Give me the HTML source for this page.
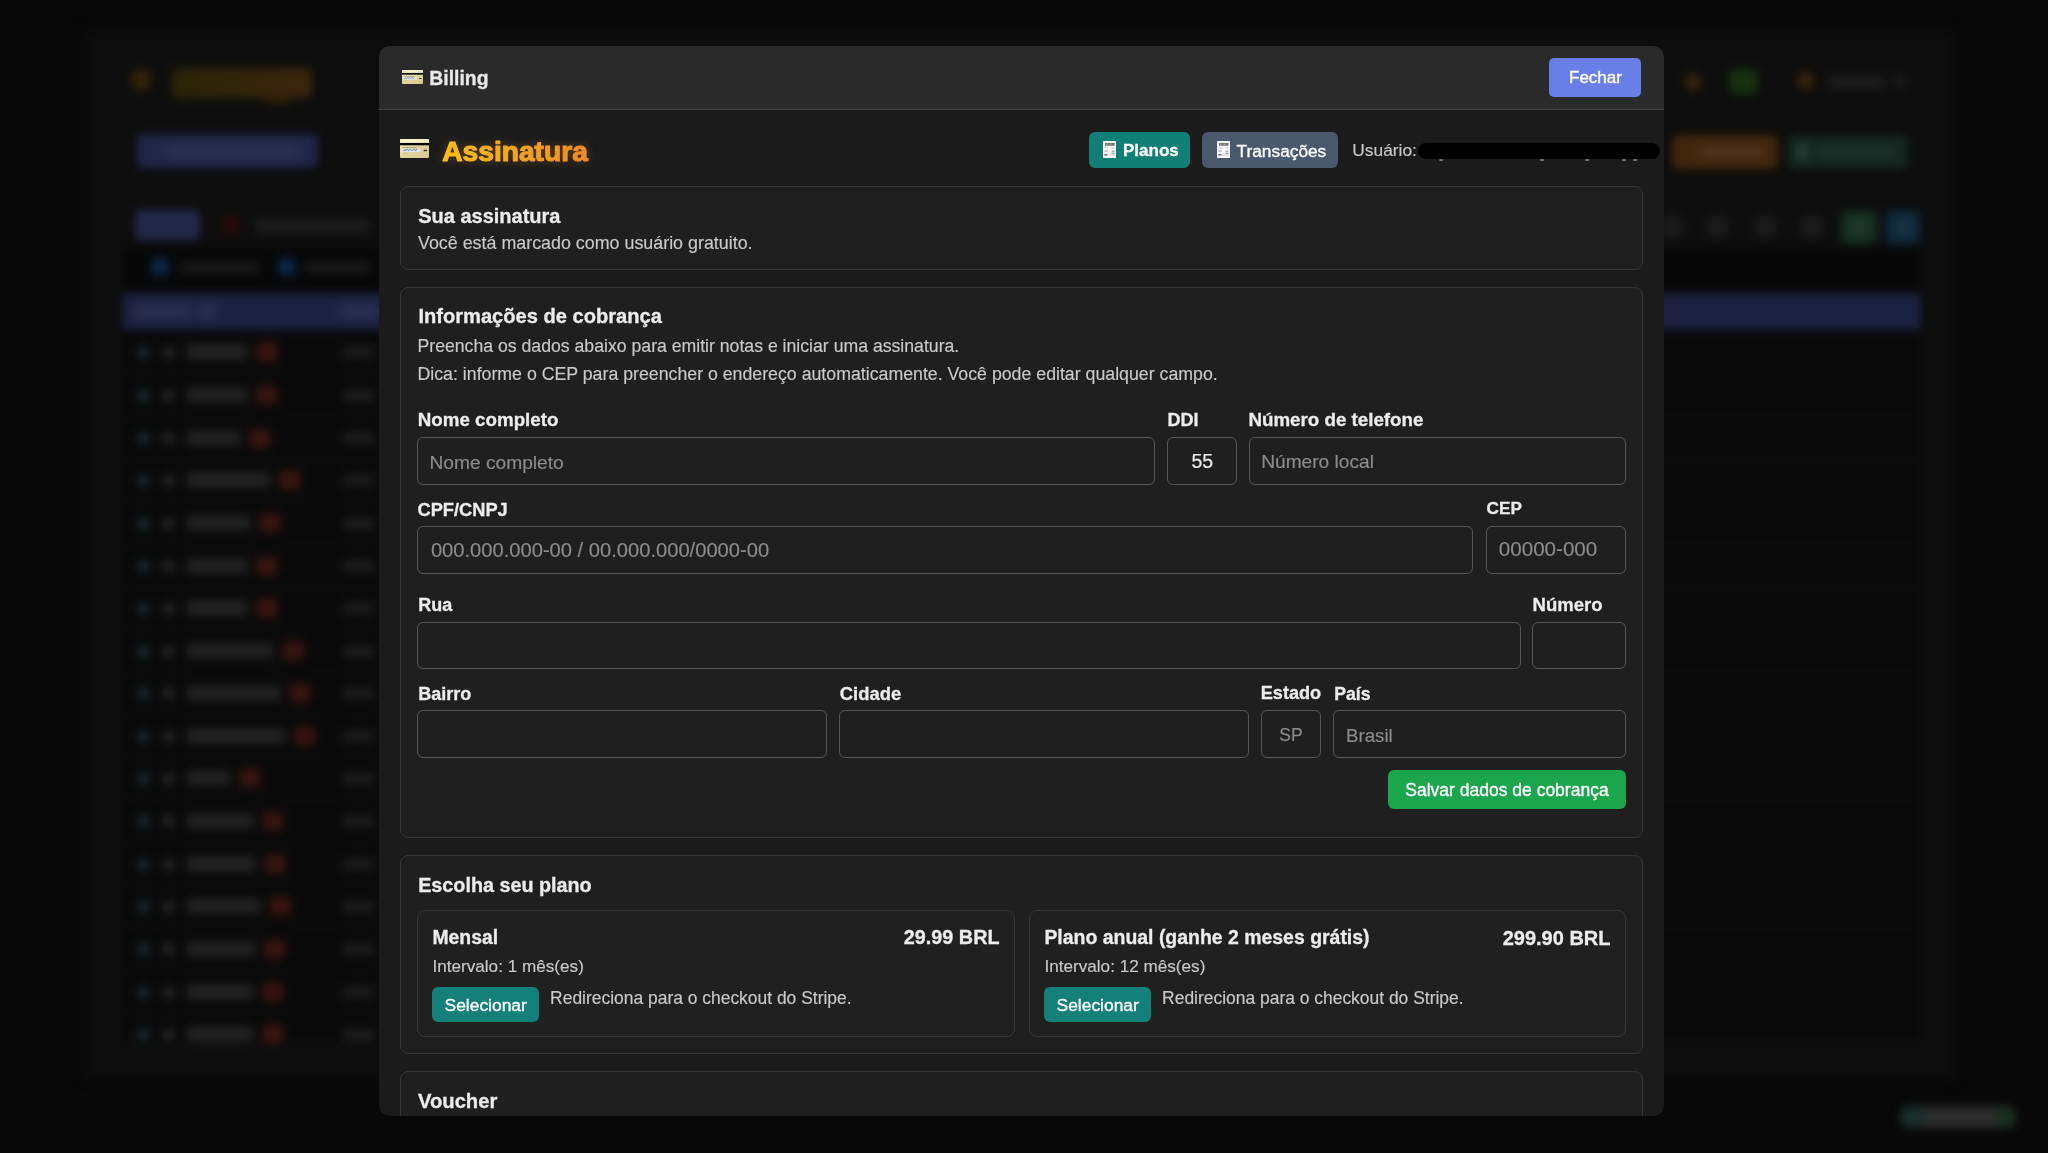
<!DOCTYPE html>
<html><head><meta charset="utf-8"><title>Billing</title>
<style>
html,body{margin:0;padding:0;}
body{width:2048px;height:1153px;overflow:hidden;position:relative;background:#080808;font-family:"Liberation Sans",sans-serif;}
.t{position:absolute;white-space:nowrap;}
.r{position:absolute;}
#bg{position:absolute;left:0;top:0;width:2048px;height:1153px;filter:blur(5px);}
#modalclip{position:absolute;left:0;top:0;width:2048px;height:1153px;will-change:transform;clip-path:inset(46px 384px 37px 379px round 10px);}
</style></head><body>
<div id="bg">
<div class="r" style="left:82px;top:28px;width:1874px;height:1053px;background:#0b0b0b;"></div>
<div class="r" style="left:92px;top:36px;width:1858px;height:1040px;background:#0d0d0d;"></div>
<div class="r" style="left:123px;top:247px;width:1797px;height:794px;background:#090909;"></div>
<div class="r" style="left:123px;top:247px;width:1797px;height:46px;background:#070707;"></div>
<div class="r" style="left:130px;top:68px;width:22px;height:23px;background:#33200a;border-radius:50%;"></div>
<div class="r" style="left:172px;top:68px;width:140px;height:30px;background:linear-gradient(90deg,#2c2408,#3a260a);border-radius:5px;"></div>
<div class="r" style="left:265px;top:92px;width:25px;height:11px;background:#33220a;border-radius:4px;"></div>
<div class="r" style="left:137px;top:134px;width:181px;height:34px;background:#20264a;border-radius:6px;"></div>
<div class="r" style="left:165px;top:145px;width:135px;height:12px;background:#2c3152;border-radius:3px;"></div>
<div class="r" style="left:135px;top:210px;width:65px;height:30px;background:#22284a;border-radius:6px;"></div>
<div class="r" style="left:222px;top:216px;width:16px;height:18px;background:#2a0a0a;border-radius:3px;"></div>
<div class="r" style="left:255px;top:219px;width:115px;height:14px;background:#1c1c1c;border-radius:3px;"></div>
<div class="r" style="left:150px;top:257px;width:20px;height:20px;background:#0a2648;border-radius:50%;"></div>
<div class="r" style="left:180px;top:262px;width:80px;height:11px;background:#1a1a1a;border-radius:3px;"></div>
<div class="r" style="left:277px;top:257px;width:20px;height:20px;background:#0a2648;border-radius:50%;"></div>
<div class="r" style="left:305px;top:262px;width:65px;height:11px;background:#1a1a1a;border-radius:3px;"></div>
<div class="r" style="left:123px;top:293px;width:1797px;height:37px;background:#1c2242;"></div>
<div class="r" style="left:135px;top:305px;width:55px;height:13px;background:#2a3050;border-radius:3px;"></div>
<div class="r" style="left:198px;top:305px;width:17px;height:13px;background:#2a3050;border-radius:3px;"></div>
<div class="r" style="left:340px;top:305px;width:40px;height:13px;background:#2a3050;border-radius:3px;"></div>
<div class="r" style="left:137px;top:346px;width:13px;height:13px;background:#1a2c30;border-radius:50%;"></div>
<div class="r" style="left:162px;top:346px;width:13px;height:13px;background:#262626;border-radius:50%;"></div>
<div class="r" style="left:186px;top:344px;width:62px;height:16px;background:#212121;border-radius:3px;"></div>
<div class="r" style="left:256px;top:342px;width:22px;height:20px;background:#361410;border-radius:5px;"></div>
<div class="r" style="left:343px;top:346px;width:32px;height:13px;background:#1c1c1c;border-radius:3px;"></div>
<div class="r" style="left:123px;top:373px;width:1797px;height:1px;background:#121212;"></div>
<div class="r" style="left:137px;top:389px;width:13px;height:13px;background:#1a2c30;border-radius:50%;"></div>
<div class="r" style="left:162px;top:389px;width:13px;height:13px;background:#262626;border-radius:50%;"></div>
<div class="r" style="left:186px;top:387px;width:62px;height:16px;background:#212121;border-radius:3px;"></div>
<div class="r" style="left:256px;top:385px;width:22px;height:20px;background:#361410;border-radius:5px;"></div>
<div class="r" style="left:343px;top:389px;width:32px;height:13px;background:#1c1c1c;border-radius:3px;"></div>
<div class="r" style="left:123px;top:416px;width:1797px;height:1px;background:#121212;"></div>
<div class="r" style="left:137px;top:432px;width:13px;height:13px;background:#1a2c30;border-radius:50%;"></div>
<div class="r" style="left:162px;top:432px;width:13px;height:13px;background:#262626;border-radius:50%;"></div>
<div class="r" style="left:186px;top:430px;width:55px;height:16px;background:#212121;border-radius:3px;"></div>
<div class="r" style="left:249px;top:428px;width:22px;height:20px;background:#361410;border-radius:5px;"></div>
<div class="r" style="left:343px;top:432px;width:32px;height:13px;background:#1c1c1c;border-radius:3px;"></div>
<div class="r" style="left:123px;top:459px;width:1797px;height:1px;background:#121212;"></div>
<div class="r" style="left:137px;top:474px;width:13px;height:13px;background:#1a2c30;border-radius:50%;"></div>
<div class="r" style="left:162px;top:474px;width:13px;height:13px;background:#262626;border-radius:50%;"></div>
<div class="r" style="left:186px;top:472px;width:85px;height:16px;background:#212121;border-radius:3px;"></div>
<div class="r" style="left:279px;top:470px;width:22px;height:20px;background:#361410;border-radius:5px;"></div>
<div class="r" style="left:343px;top:474px;width:32px;height:13px;background:#1c1c1c;border-radius:3px;"></div>
<div class="r" style="left:123px;top:501px;width:1797px;height:1px;background:#121212;"></div>
<div class="r" style="left:137px;top:517px;width:13px;height:13px;background:#1a2c30;border-radius:50%;"></div>
<div class="r" style="left:162px;top:517px;width:13px;height:13px;background:#262626;border-radius:50%;"></div>
<div class="r" style="left:186px;top:515px;width:65px;height:16px;background:#212121;border-radius:3px;"></div>
<div class="r" style="left:259px;top:513px;width:22px;height:20px;background:#361410;border-radius:5px;"></div>
<div class="r" style="left:343px;top:517px;width:32px;height:13px;background:#1c1c1c;border-radius:3px;"></div>
<div class="r" style="left:123px;top:544px;width:1797px;height:1px;background:#121212;"></div>
<div class="r" style="left:137px;top:560px;width:13px;height:13px;background:#1a2c30;border-radius:50%;"></div>
<div class="r" style="left:162px;top:560px;width:13px;height:13px;background:#262626;border-radius:50%;"></div>
<div class="r" style="left:186px;top:558px;width:62px;height:16px;background:#212121;border-radius:3px;"></div>
<div class="r" style="left:256px;top:556px;width:22px;height:20px;background:#361410;border-radius:5px;"></div>
<div class="r" style="left:343px;top:560px;width:32px;height:13px;background:#1c1c1c;border-radius:3px;"></div>
<div class="r" style="left:123px;top:587px;width:1797px;height:1px;background:#121212;"></div>
<div class="r" style="left:137px;top:602px;width:13px;height:13px;background:#1a2c30;border-radius:50%;"></div>
<div class="r" style="left:162px;top:602px;width:13px;height:13px;background:#262626;border-radius:50%;"></div>
<div class="r" style="left:186px;top:600px;width:62px;height:16px;background:#212121;border-radius:3px;"></div>
<div class="r" style="left:256px;top:598px;width:22px;height:20px;background:#361410;border-radius:5px;"></div>
<div class="r" style="left:343px;top:602px;width:32px;height:13px;background:#1c1c1c;border-radius:3px;"></div>
<div class="r" style="left:123px;top:629px;width:1797px;height:1px;background:#121212;"></div>
<div class="r" style="left:137px;top:645px;width:13px;height:13px;background:#1a2c30;border-radius:50%;"></div>
<div class="r" style="left:162px;top:645px;width:13px;height:13px;background:#262626;border-radius:50%;"></div>
<div class="r" style="left:186px;top:643px;width:88px;height:16px;background:#212121;border-radius:3px;"></div>
<div class="r" style="left:282px;top:641px;width:22px;height:20px;background:#361410;border-radius:5px;"></div>
<div class="r" style="left:343px;top:645px;width:32px;height:13px;background:#1c1c1c;border-radius:3px;"></div>
<div class="r" style="left:123px;top:672px;width:1797px;height:1px;background:#121212;"></div>
<div class="r" style="left:137px;top:687px;width:13px;height:13px;background:#1a2c30;border-radius:50%;"></div>
<div class="r" style="left:162px;top:687px;width:13px;height:13px;background:#262626;border-radius:50%;"></div>
<div class="r" style="left:186px;top:685px;width:95px;height:16px;background:#212121;border-radius:3px;"></div>
<div class="r" style="left:289px;top:683px;width:22px;height:20px;background:#361410;border-radius:5px;"></div>
<div class="r" style="left:343px;top:687px;width:32px;height:13px;background:#1c1c1c;border-radius:3px;"></div>
<div class="r" style="left:123px;top:714px;width:1797px;height:1px;background:#121212;"></div>
<div class="r" style="left:137px;top:730px;width:13px;height:13px;background:#1a2c30;border-radius:50%;"></div>
<div class="r" style="left:162px;top:730px;width:13px;height:13px;background:#262626;border-radius:50%;"></div>
<div class="r" style="left:186px;top:728px;width:100px;height:16px;background:#212121;border-radius:3px;"></div>
<div class="r" style="left:294px;top:726px;width:22px;height:20px;background:#361410;border-radius:5px;"></div>
<div class="r" style="left:343px;top:730px;width:32px;height:13px;background:#1c1c1c;border-radius:3px;"></div>
<div class="r" style="left:123px;top:757px;width:1797px;height:1px;background:#121212;"></div>
<div class="r" style="left:137px;top:772px;width:13px;height:13px;background:#1a2c30;border-radius:50%;"></div>
<div class="r" style="left:162px;top:772px;width:13px;height:13px;background:#262626;border-radius:50%;"></div>
<div class="r" style="left:186px;top:770px;width:45px;height:16px;background:#212121;border-radius:3px;"></div>
<div class="r" style="left:239px;top:768px;width:22px;height:20px;background:#361410;border-radius:5px;"></div>
<div class="r" style="left:343px;top:772px;width:32px;height:13px;background:#1c1c1c;border-radius:3px;"></div>
<div class="r" style="left:123px;top:799px;width:1797px;height:1px;background:#121212;"></div>
<div class="r" style="left:137px;top:815px;width:13px;height:13px;background:#1a2c30;border-radius:50%;"></div>
<div class="r" style="left:162px;top:815px;width:13px;height:13px;background:#262626;border-radius:50%;"></div>
<div class="r" style="left:186px;top:813px;width:68px;height:16px;background:#212121;border-radius:3px;"></div>
<div class="r" style="left:262px;top:811px;width:22px;height:20px;background:#361410;border-radius:5px;"></div>
<div class="r" style="left:343px;top:815px;width:32px;height:13px;background:#1c1c1c;border-radius:3px;"></div>
<div class="r" style="left:123px;top:842px;width:1797px;height:1px;background:#121212;"></div>
<div class="r" style="left:137px;top:858px;width:13px;height:13px;background:#1a2c30;border-radius:50%;"></div>
<div class="r" style="left:162px;top:858px;width:13px;height:13px;background:#262626;border-radius:50%;"></div>
<div class="r" style="left:186px;top:856px;width:70px;height:16px;background:#212121;border-radius:3px;"></div>
<div class="r" style="left:264px;top:854px;width:22px;height:20px;background:#361410;border-radius:5px;"></div>
<div class="r" style="left:343px;top:858px;width:32px;height:13px;background:#1c1c1c;border-radius:3px;"></div>
<div class="r" style="left:123px;top:885px;width:1797px;height:1px;background:#121212;"></div>
<div class="r" style="left:137px;top:900px;width:13px;height:13px;background:#1a2c30;border-radius:50%;"></div>
<div class="r" style="left:162px;top:900px;width:13px;height:13px;background:#262626;border-radius:50%;"></div>
<div class="r" style="left:186px;top:898px;width:75px;height:16px;background:#212121;border-radius:3px;"></div>
<div class="r" style="left:269px;top:896px;width:22px;height:20px;background:#361410;border-radius:5px;"></div>
<div class="r" style="left:343px;top:900px;width:32px;height:13px;background:#1c1c1c;border-radius:3px;"></div>
<div class="r" style="left:123px;top:927px;width:1797px;height:1px;background:#121212;"></div>
<div class="r" style="left:137px;top:943px;width:13px;height:13px;background:#1a2c30;border-radius:50%;"></div>
<div class="r" style="left:162px;top:943px;width:13px;height:13px;background:#262626;border-radius:50%;"></div>
<div class="r" style="left:186px;top:941px;width:70px;height:16px;background:#212121;border-radius:3px;"></div>
<div class="r" style="left:264px;top:939px;width:22px;height:20px;background:#361410;border-radius:5px;"></div>
<div class="r" style="left:343px;top:943px;width:32px;height:13px;background:#1c1c1c;border-radius:3px;"></div>
<div class="r" style="left:123px;top:970px;width:1797px;height:1px;background:#121212;"></div>
<div class="r" style="left:137px;top:986px;width:13px;height:13px;background:#1a2c30;border-radius:50%;"></div>
<div class="r" style="left:162px;top:986px;width:13px;height:13px;background:#262626;border-radius:50%;"></div>
<div class="r" style="left:186px;top:984px;width:68px;height:16px;background:#212121;border-radius:3px;"></div>
<div class="r" style="left:262px;top:982px;width:22px;height:20px;background:#361410;border-radius:5px;"></div>
<div class="r" style="left:343px;top:986px;width:32px;height:13px;background:#1c1c1c;border-radius:3px;"></div>
<div class="r" style="left:123px;top:1013px;width:1797px;height:1px;background:#121212;"></div>
<div class="r" style="left:137px;top:1028px;width:13px;height:13px;background:#1a2c30;border-radius:50%;"></div>
<div class="r" style="left:162px;top:1028px;width:13px;height:13px;background:#262626;border-radius:50%;"></div>
<div class="r" style="left:186px;top:1026px;width:68px;height:16px;background:#212121;border-radius:3px;"></div>
<div class="r" style="left:262px;top:1024px;width:22px;height:20px;background:#361410;border-radius:5px;"></div>
<div class="r" style="left:343px;top:1028px;width:32px;height:13px;background:#1c1c1c;border-radius:3px;"></div>
<div class="r" style="left:1684px;top:73px;width:18px;height:18px;background:#33250a;border-radius:50%;"></div>
<div class="r" style="left:1729px;top:69px;width:29px;height:25px;background:#16300f;border-radius:4px;"></div>
<div class="r" style="left:1797px;top:72px;width:18px;height:18px;background:#3a220a;border-radius:50%;"></div>
<div class="r" style="left:1827px;top:75px;width:58px;height:14px;background:#1c1c1c;border-radius:3px;"></div>
<div class="r" style="left:1893px;top:74px;width:14px;height:14px;background:#1c1c1c;border-radius:50%;"></div>
<div class="r" style="left:1672px;top:135px;width:106px;height:34px;background:#42260c;border-radius:6px;"></div>
<div class="r" style="left:1700px;top:146px;width:65px;height:12px;background:#4e3420;border-radius:3px;"></div>
<div class="r" style="left:1788px;top:135px;width:120px;height:34px;background:#13271f;border-radius:6px;"></div>
<div class="r" style="left:1795px;top:144px;width:15px;height:16px;background:#263a36;border-radius:50%;"></div>
<div class="r" style="left:1818px;top:146px;width:77px;height:12px;background:#1c302a;border-radius:3px;"></div>
<div class="r" style="left:1660px;top:215px;width:24px;height:24px;background:#1c1c1c;border-radius:50%;"></div>
<div class="r" style="left:1705px;top:215px;width:24px;height:24px;background:#1c1c1c;border-radius:50%;"></div>
<div class="r" style="left:1753px;top:215px;width:24px;height:24px;background:#1c1c1c;border-radius:50%;"></div>
<div class="r" style="left:1800px;top:215px;width:24px;height:24px;background:#1c1c1c;border-radius:50%;"></div>
<div class="r" style="left:1841px;top:211px;width:36px;height:33px;background:#163020;border-radius:5px;"></div>
<div class="r" style="left:1886px;top:211px;width:34px;height:33px;background:#0e2a3e;border-radius:5px;"></div>
<div class="r" style="left:1852px;top:221px;width:14px;height:13px;background:#24382c;border-radius:3px;"></div>
<div class="r" style="left:1896px;top:221px;width:14px;height:13px;background:#1e3440;border-radius:3px;"></div>
<div class="r" style="left:1900px;top:1106px;width:117px;height:22px;background:#2c2c2c;border-radius:11px;"></div>
<div class="r" style="left:1902px;top:1107px;width:23px;height:20px;background:#16302e;border-radius:10px;"></div>
<div class="r" style="left:1995px;top:1107px;width:20px;height:20px;background:#173020;border-radius:10px;"></div>
</div>
<div id="modalclip">
<div class="r" style="left:379px;top:46px;width:1285px;height:1070px;background:#1b1b1b;border-radius:10px;overflow:hidden;"></div>
<div class="r" style="left:379px;top:46px;width:1285px;height:63px;background:#2a2a2a;border-radius:10px 10px 0 0;"></div>
<div class="r" style="left:379px;top:109px;width:1285px;height:1px;background:#444444;"></div>
<svg class="r" style="left:402px;top:70px" width="21" height="14" viewBox="0 0 29 19" preserveAspectRatio="none"><defs><linearGradient id="cgb" x1="0" y1="0" x2="1" y2="1"><stop offset="0" stop-color="#f4efcc"/><stop offset="0.5" stop-color="#e2d49c"/><stop offset="1" stop-color="#d6c690"/></linearGradient></defs><rect x="0" y="0" width="29" height="19" rx="1.3" fill="url(#cgb)"/><rect x="0" y="0" width="29" height="3.6" rx="1.3" fill="#f6f2c8"/><rect x="0" y="4" width="29" height="2.3" fill="#050505"/><rect x="2.5" y="8.2" width="14" height="0.6" fill="#8a8470"/><rect x="2" y="9.8" width="18.5" height="3.2" fill="#dfe5e8"/><path d="M3.5 12 l1.5 -1.6 l1 1.2 l1.5 -1.4 l1.2 1.3 l1.6 -1.2 l1.2 1.2 l2 -1.3 l1.5 1.2 l2 -1" stroke="#5a6890" stroke-width="0.9" fill="none"/><rect x="23.6" y="10.8" width="3.4" height="1.5" rx="0.5" fill="#3a3a3a"/><rect x="3" y="14.5" width="4" height="0.6" fill="#b8a878"/></svg>
<div class="t" style="left:429.3px;top:66.63px;font-size:19.4px;line-height:23.28px;font-weight:700;-webkit-text-stroke:0.3px currentColor;color:#e8e8e8;">Billing</div>
<div class="r" style="left:1549px;top:58px;width:92px;height:39px;background:#6a7ee8;border-radius:5px;"></div>
<div class="t" style="left:1569px;top:68.41px;font-size:17px;line-height:20.4px;color:#ffffff;-webkit-text-stroke:0.35px currentColor;">Fechar</div>
<svg class="r" style="left:400px;top:139px" width="29" height="19" viewBox="0 0 29 19" preserveAspectRatio="none"><defs><linearGradient id="cgb" x1="0" y1="0" x2="1" y2="1"><stop offset="0" stop-color="#f4efcc"/><stop offset="0.5" stop-color="#e2d49c"/><stop offset="1" stop-color="#d6c690"/></linearGradient></defs><rect x="0" y="0" width="29" height="19" rx="1.3" fill="url(#cgb)"/><rect x="0" y="0" width="29" height="3.6" rx="1.3" fill="#f6f2c8"/><rect x="0" y="4" width="29" height="2.3" fill="#050505"/><rect x="2.5" y="8.2" width="14" height="0.6" fill="#8a8470"/><rect x="2" y="9.8" width="18.5" height="3.2" fill="#dfe5e8"/><path d="M3.5 12 l1.5 -1.6 l1 1.2 l1.5 -1.4 l1.2 1.3 l1.6 -1.2 l1.2 1.2 l2 -1.3 l1.5 1.2 l2 -1" stroke="#5a6890" stroke-width="0.9" fill="none"/><rect x="23.6" y="10.8" width="3.4" height="1.5" rx="0.5" fill="#3a3a3a"/><rect x="3" y="14.5" width="4" height="0.6" fill="#b8a878"/></svg>
<svg class="r" style="left:430px;top:120px;overflow:visible;filter:drop-shadow(0 0 5px rgba(240,150,30,0.30))" width="180" height="60"><defs><linearGradient id="ag" x1="0" y1="0" x2="1" y2="0"><stop offset="0" stop-color="#f8be1a"/><stop offset="1" stop-color="#ee8c2c"/></linearGradient></defs><text x="12.2" y="40.8" font-family="Liberation Sans" font-weight="700" font-size="28.2" fill="url(#ag)" stroke="url(#ag)" stroke-width="1.1" stroke-linejoin="round">Assinatura</text></svg>
<div class="r" style="left:1089px;top:132px;width:101px;height:36px;background:#117f75;border-radius:6px;"></div>
<div class="r" style="left:1202px;top:132px;width:136px;height:36px;background:#4a586e;border-radius:6px;"></div>
<svg class="r" style="left:1103px;top:141px" width="13" height="17" viewBox="0 0 13 17"><rect x="0" y="0" width="13" height="17" rx="0.6" fill="#f3f8f8"/><rect x="2" y="2" width="9.5" height="2.7" fill="#707070"/><rect x="3" y="2.6" width="2" height="1.4" fill="#9a9a9a"/><rect x="6.5" y="2.6" width="2" height="1.4" fill="#9a9a9a"/><rect x="1.5" y="6.5" width="3.5" height="1" fill="#e0c4c4"/><rect x="8.5" y="6.3" width="3" height="1" fill="#cfcfcf"/><rect x="1.5" y="9.5" width="3.5" height="1.1" fill="#c9a0a0"/><rect x="8.5" y="9.8" width="3" height="1" fill="#9a9a9a"/><rect x="1.5" y="13" width="3" height="1.6" fill="#707070"/><rect x="7" y="13.5" width="5" height="1" fill="#e8d0d8"/><rect x="8.5" y="11.8" width="3" height="0.9" fill="#777"/></svg>
<div class="t" style="left:1123px;top:140.91px;font-size:17px;line-height:20.4px;font-weight:700;-webkit-text-stroke:0.3px currentColor;color:#ffffff;">Planos</div>
<svg class="r" style="left:1217px;top:141px" width="13" height="17" viewBox="0 0 13 17"><rect x="0" y="0" width="13" height="17" rx="0.6" fill="#f3f8f8"/><rect x="2" y="2" width="9.5" height="2.7" fill="#707070"/><rect x="3" y="2.6" width="2" height="1.4" fill="#9a9a9a"/><rect x="6.5" y="2.6" width="2" height="1.4" fill="#9a9a9a"/><rect x="1.5" y="6.5" width="3.5" height="1" fill="#e0c4c4"/><rect x="8.5" y="6.3" width="3" height="1" fill="#cfcfcf"/><rect x="1.5" y="9.5" width="3.5" height="1.1" fill="#c9a0a0"/><rect x="8.5" y="9.8" width="3" height="1" fill="#9a9a9a"/><rect x="1.5" y="13" width="3" height="1.6" fill="#707070"/><rect x="7" y="13.5" width="5" height="1" fill="#e8d0d8"/><rect x="8.5" y="11.8" width="3" height="0.9" fill="#777"/></svg>
<div class="t" style="left:1236.6px;top:141.02px;font-size:17.3px;line-height:20.76px;color:#ffffff;-webkit-text-stroke:0.35px currentColor;">Transações</div>
<div class="t" style="left:1352.3px;top:140.48px;font-size:17.35px;line-height:20.82px;-webkit-text-stroke:0.15px currentColor;color:#c9c9c9;">Usuário:</div>
<div class="r" style="left:1418px;top:143px;width:242px;height:16px;background:#000;border-radius:8px;"></div>
<div class="r" style="left:1439px;top:159px;width:4px;height:2px;background:#777;border-radius:1px;"></div>
<div class="r" style="left:1540px;top:159px;width:4px;height:2px;background:#777;border-radius:1px;"></div>
<div class="r" style="left:1585px;top:159px;width:4px;height:2px;background:#777;border-radius:1px;"></div>
<div class="r" style="left:1622px;top:159px;width:4px;height:2px;background:#777;border-radius:1px;"></div>
<div class="r" style="left:1633px;top:159px;width:4px;height:2px;background:#777;border-radius:1px;"></div>
<div class="r" style="left:400px;top:186px;width:1243px;height:84px;background:#1f1f1f;border:1px solid #363636;border-radius:8px;box-sizing:border-box;"></div>
<div class="t" style="left:418.2px;top:203.77px;font-size:20px;line-height:24.0px;font-weight:700;-webkit-text-stroke:0.3px currentColor;color:#ececec;">Sua assinatura</div>
<div class="t" style="left:418px;top:233.08px;font-size:17.87px;line-height:21.44px;-webkit-text-stroke:0.15px currentColor;color:#c9c9c9;">Você está marcado como usuário gratuito.</div>
<div class="r" style="left:400px;top:287px;width:1243px;height:551px;background:#1f1f1f;border:1px solid #363636;border-radius:8px;box-sizing:border-box;"></div>
<div class="t" style="left:418.4px;top:304.37px;font-size:20.1px;line-height:24.12px;font-weight:700;-webkit-text-stroke:0.3px currentColor;color:#ececec;">Informações de cobrança</div>
<div class="t" style="left:417.5px;top:336.28px;font-size:17.66px;line-height:21.19px;-webkit-text-stroke:0.15px currentColor;color:#c9c9c9;">Preencha os dados abaixo para emitir notas e iniciar uma assinatura.</div>
<div class="t" style="left:417.5px;top:364.40px;font-size:17.74px;line-height:21.29px;-webkit-text-stroke:0.15px currentColor;color:#c9c9c9;">Dica: informe o CEP para preencher o endereço automaticamente. Você pode editar qualquer campo.</div>
<div class="t" style="left:417.8px;top:409.15px;font-size:18.75px;line-height:22.5px;font-weight:700;-webkit-text-stroke:0.3px currentColor;color:#ececec;">Nome completo</div>
<div class="t" style="left:1167.6px;top:409.96px;font-size:18px;line-height:21.6px;font-weight:700;-webkit-text-stroke:0.3px currentColor;color:#ececec;">DDI</div>
<div class="t" style="left:1248.4px;top:409.25px;font-size:18.75px;line-height:22.5px;font-weight:700;-webkit-text-stroke:0.3px currentColor;color:#ececec;">Número de telefone</div>
<div class="r" style="left:417px;top:437px;width:738px;height:48px;border:1px solid #575757;border-radius:6px;box-sizing:border-box;"></div>
<div class="r" style="left:1167px;top:437px;width:70px;height:48px;border:1px solid #575757;border-radius:6px;box-sizing:border-box;"></div>
<div class="r" style="left:1249px;top:437px;width:377px;height:48px;border:1px solid #575757;border-radius:6px;box-sizing:border-box;"></div>
<div class="t" style="left:429.4px;top:450.72px;font-size:19.2px;line-height:23.04px;-webkit-text-stroke:0.15px currentColor;color:#8c8c8c;">Nome completo</div>
<div class="t" style="left:1202.3px;transform:translateX(-50%);top:450.15px;font-size:19.6px;line-height:23.52px;-webkit-text-stroke:0.15px currentColor;color:#ececec;">55</div>
<div class="t" style="left:1261.2px;top:450.57px;font-size:19.15px;line-height:22.98px;-webkit-text-stroke:0.15px currentColor;color:#8c8c8c;">Número local</div>
<div class="t" style="left:417.5px;top:498.72px;font-size:18.25px;line-height:21.9px;font-weight:700;-webkit-text-stroke:0.3px currentColor;color:#ececec;">CPF/CNPJ</div>
<div class="t" style="left:1486.5px;top:498.02px;font-size:17.2px;line-height:20.64px;font-weight:700;-webkit-text-stroke:0.3px currentColor;color:#ececec;">CEP</div>
<div class="r" style="left:417px;top:526px;width:1056px;height:48px;border:1px solid #575757;border-radius:6px;box-sizing:border-box;"></div>
<div class="r" style="left:1486px;top:526px;width:140px;height:48px;border:1px solid #575757;border-radius:6px;box-sizing:border-box;"></div>
<div class="t" style="left:430.9px;top:537.72px;font-size:20.15px;line-height:24.18px;-webkit-text-stroke:0.15px currentColor;color:#8c8c8c;">000.000.000-00 / 00.000.000/0000-00</div>
<div class="t" style="left:1498.8px;top:537.30px;font-size:20.6px;line-height:24.72px;-webkit-text-stroke:0.15px currentColor;color:#8c8c8c;">00000-000</div>
<div class="t" style="left:418.3px;top:594.96px;font-size:18px;line-height:21.6px;font-weight:700;-webkit-text-stroke:0.3px currentColor;color:#ececec;">Rua</div>
<div class="t" style="left:1532.5px;top:594.04px;font-size:18.55px;line-height:22.26px;font-weight:700;-webkit-text-stroke:0.3px currentColor;color:#ececec;">Número</div>
<div class="r" style="left:417px;top:622px;width:1104px;height:47px;border:1px solid #575757;border-radius:6px;box-sizing:border-box;"></div>
<div class="r" style="left:1532px;top:622px;width:94px;height:47px;border:1px solid #575757;border-radius:6px;box-sizing:border-box;"></div>
<div class="t" style="left:418.3px;top:683.66px;font-size:18px;line-height:21.6px;font-weight:700;-webkit-text-stroke:0.3px currentColor;color:#ececec;">Bairro</div>
<div class="t" style="left:839.8px;top:683.18px;font-size:18.4px;line-height:22.08px;font-weight:700;-webkit-text-stroke:0.3px currentColor;color:#ececec;">Cidade</div>
<div class="t" style="left:1260.7px;top:683.42px;font-size:18.15px;line-height:21.78px;font-weight:700;-webkit-text-stroke:0.3px currentColor;color:#ececec;">Estado</div>
<div class="t" style="left:1334.2px;top:683.84px;font-size:17.7px;line-height:21.24px;font-weight:700;-webkit-text-stroke:0.3px currentColor;color:#ececec;">País</div>
<div class="r" style="left:417px;top:710px;width:410px;height:48px;border:1px solid #575757;border-radius:6px;box-sizing:border-box;"></div>
<div class="r" style="left:839px;top:710px;width:410px;height:48px;border:1px solid #575757;border-radius:6px;box-sizing:border-box;"></div>
<div class="r" style="left:1261px;top:710px;width:60px;height:48px;border:1px solid #575757;border-radius:6px;box-sizing:border-box;"></div>
<div class="r" style="left:1333px;top:710px;width:293px;height:48px;border:1px solid #575757;border-radius:6px;box-sizing:border-box;"></div>
<div class="t" style="left:1291px;transform:translateX(-50%);top:724.73px;font-size:17.5px;line-height:21.0px;-webkit-text-stroke:0.15px currentColor;color:#8c8c8c;">SP</div>
<div class="t" style="left:1346px;top:724.60px;font-size:18.7px;line-height:22.44px;-webkit-text-stroke:0.15px currentColor;color:#8c8c8c;">Brasil</div>
<div class="r" style="left:1388px;top:770px;width:238px;height:39px;background:#1ba54c;border-radius:6px;"></div>
<div class="t" style="left:1405.3px;top:780.23px;font-size:17.5px;line-height:21.0px;color:#ffffff;-webkit-text-stroke:0.35px currentColor;">Salvar dados de cobrança</div>
<div class="r" style="left:400px;top:855px;width:1243px;height:199px;background:#1f1f1f;border:1px solid #363636;border-radius:8px;box-sizing:border-box;"></div>
<div class="t" style="left:418.2px;top:873.70px;font-size:19.75px;line-height:23.7px;font-weight:700;-webkit-text-stroke:0.3px currentColor;color:#ececec;">Escolha seu plano</div>
<div class="r" style="left:417px;top:910px;width:598px;height:127px;background:#202020;border:1px solid #383838;border-radius:8px;box-sizing:border-box;"></div>
<div class="t" style="left:432.4px;top:926.13px;font-size:19.4px;line-height:23.28px;font-weight:700;-webkit-text-stroke:0.3px currentColor;color:#ececec;">Mensal</div>
<div class="t" style="right:1048.5px;top:925.76px;font-size:19.8px;line-height:23.76px;font-weight:700;-webkit-text-stroke:0.3px currentColor;color:#ececec;">29.99 BRL</div>
<div class="t" style="left:432.4px;top:955.96px;font-size:17.15px;line-height:20.58px;-webkit-text-stroke:0.15px currentColor;color:#c9c9c9;">Intervalo: 1 mês(es)</div>
<div class="r" style="left:432px;top:987px;width:107px;height:35px;background:#14807a;border-radius:6px;"></div>
<div class="t" style="left:444.6px;top:994.63px;font-size:17.4px;line-height:20.88px;color:#ffffff;-webkit-text-stroke:0.35px currentColor;">Selecionar</div>
<div class="t" style="left:550.1px;top:987.98px;font-size:17.45px;line-height:20.94px;-webkit-text-stroke:0.15px currentColor;color:#c9c9c9;">Redireciona para o checkout do Stripe.</div>
<div class="r" style="left:1029px;top:910px;width:597px;height:127px;background:#202020;border:1px solid #383838;border-radius:8px;box-sizing:border-box;"></div>
<div class="t" style="left:1044.4px;top:926.09px;font-size:19.45px;line-height:23.34px;font-weight:700;-webkit-text-stroke:0.3px currentColor;color:#ececec;">Plano anual (ganhe 2 meses grátis)</div>
<div class="t" style="right:437.5px;top:925.57px;font-size:20px;line-height:24.0px;font-weight:700;-webkit-text-stroke:0.3px currentColor;color:#ececec;">299.90 BRL</div>
<div class="t" style="left:1044.4px;top:955.96px;font-size:17.15px;line-height:20.58px;-webkit-text-stroke:0.15px currentColor;color:#c9c9c9;">Intervalo: 12 mês(es)</div>
<div class="r" style="left:1044px;top:987px;width:107px;height:35px;background:#14807a;border-radius:6px;"></div>
<div class="t" style="left:1056.6px;top:994.63px;font-size:17.4px;line-height:20.88px;color:#ffffff;-webkit-text-stroke:0.35px currentColor;">Selecionar</div>
<div class="t" style="left:1162.1px;top:987.98px;font-size:17.45px;line-height:20.94px;-webkit-text-stroke:0.15px currentColor;color:#c9c9c9;">Redireciona para o checkout do Stripe.</div>
<div class="r" style="left:400px;top:1071px;width:1243px;height:129px;background:#1f1f1f;border:1px solid #363636;border-radius:8px;box-sizing:border-box;"></div>
<div class="t" style="left:418px;top:1088.58px;font-size:20.2px;line-height:24.24px;font-weight:700;-webkit-text-stroke:0.3px currentColor;color:#ececec;">Voucher</div>
</div>
</body></html>
